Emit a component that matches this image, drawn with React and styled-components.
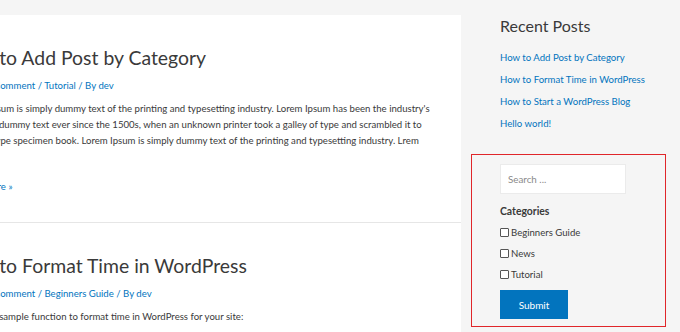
import React from "react";
import styled, { createGlobalStyle } from "styled-components";

const Global = createGlobalStyle`
  html, body {
    margin: 0;
    padding: 0;
    background: #f5f5f5;
    overflow: hidden;
  }
  body {
    font-family: Lato, "Open Sans", sans-serif;
    width: 680px;
    height: 332px;
  }
`;

const posts = [
  {
    title: "How to Add Post by Category",
    category: "Tutorial",
    text: [
      "Lorem Ipsum is simply dummy text of the printing and typesetting industry. Lorem Ipsum has been the industry's",
      "standard dummy text ever since the 1500s, when an unknown printer took a galley of type and scrambled it to",
      "make a type specimen book.  Lorem Ipsum is simply dummy text of the printing and typesetting industry. Lrem",
    ],
    more: true,
  },
  {
    title: "How to Format Time in WordPress",
    category: "Beginners Guide",
    text: ["Here is a sample function to format time in WordPress for your site:"],
  },
];

const recent = [
  "How to Add Post by Category",
  "How to Format Time in WordPress",
  "How to Start a WordPress Blog",
  "Hello world!",
];

const cats = ["Beginners Guide", "News", "Tutorial"];

const App = () => {
  return (
    <Page>
      <Global />
      <Main>
        <Inner>
          {posts.map((p) => (
            <Article key={p.title} $last={!p.more}>
              <Title>{p.title}</Title>
              <Meta>
                <a>Leave a Comment</a> / <a>{p.category}</a> / By <a>dev</a>
              </Meta>
              <Body>
                {p.text.map((t) => (
                  <Line key={t}>{t}</Line>
                ))}
              </Body>
              {p.more && <More>Read More »</More>}
            </Article>
          ))}
        </Inner>
      </Main>
      <Sidebar>
        <WidgetTitle>Recent Posts</WidgetTitle>
        <Links>
          {recent.map((r) => (
            <LinkItem key={r}>{r}</LinkItem>
          ))}
        </Links>
        <FormBox>
          <Search placeholder="Search ..." />
          <CatTitle>Categories</CatTitle>
          {cats.map((c) => (
            <Check key={c}>
              <Box />
              {c}
            </Check>
          ))}
          <Submit>Submit</Submit>
        </FormBox>
      </Sidebar>
    </Page>
  );
};

export default App;

const Page = styled.div`
  display: flex;
  align-items: flex-start;
  width: 680px;
  height: 332px;
  overflow: hidden;
`;
const Main = styled.div`
  width: 461px;
  flex: none;
  margin-top: 15px;
  background: #fff;
  overflow: hidden;
  height: 317px;
`;
const Inner = styled.div`
  margin-left: -40px;
  white-space: nowrap;
`;
const Article = styled.div`
  padding: 28px 0 ${(p) => (p.$last ? "0" : "27px")};
  border-bottom: ${(p) => (p.$last ? "none" : "1px solid #e6e6e6")};
`;
const Title = styled.h2`
  margin: 0 0 0 -6px;
  font-size: 19.4px;
  line-height: 30px;
  font-weight: 400;
  color: #3a3a3a;
`;
const Meta = styled.div`
  margin-top: 5px;
  font-size: 9.6px;
  line-height: 16px;
  color: #0274be;
  a {
    color: #0274be;
  }
`;
const Body = styled.div`
  margin-top: 7px;
`;
const Line = styled.div`
  font-size: 9.6px;
  line-height: 16px;
  color: #3a3a3a;
`;
const More = styled.div`
  margin-top: 30px;
  font-size: 9.6px;
  line-height: 16px;
  color: #0274be;
`;
const Sidebar = styled.div`
  flex: 1;
  padding: 14px 0 0 10px;
`;
const WidgetTitle = styled.h3`
  margin: 0 0 0 29px;
  font-size: 16px;
  line-height: 24px;
  font-weight: 400;
  color: #3a3a3a;
`;
const Links = styled.div`
  margin: 9px 0 0 29px;
  display: flex;
  flex-direction: column;
`;
const LinkItem = styled.a`
  font-size: 9.6px;
  line-height: 22px;
  color: #0274be;
  white-space: nowrap;
`;
const FormBox = styled.div`
  margin-top: 19px;
  width: 165px;
  border: 1px solid #e0262a;
  padding: 9px 0 7px 28px;
  display: flex;
  flex-direction: column;
  align-items: flex-start;
`;
const Search = styled.input`
  width: 126px;
  height: 30px;
  box-sizing: border-box;
  border: 1px solid #ebebeb;
  background: #fff;
  padding: 0 7px;
  font-family: inherit;
  font-size: 9.8px;
  color: #3a3a3a;
  outline: none;
  &::placeholder {
    color: #8a8a8a;
  }
`;
const CatTitle = styled.div`
  margin-top: 9px;
  font-size: 10.4px;
  line-height: 16px;
  font-weight: 700;
  color: #3a3a3a;
`;
const Check = styled.label`
  display: flex;
  align-items: center;
  height: 21px;
  font-size: 9.6px;
  color: #3a3a3a;
  &:first-of-type {
    margin-top: 3px;
  }
`;
const Box = styled.span`
  width: 7px;
  height: 7px;
  border: 1px solid #555;
  border-radius: 1px;
  background: #fff;
  margin-right: 2px;
`;
const Submit = styled.button`
  margin-top: 5px;
  width: 68px;
  height: 29px;
  border: none;
  background: #0274be;
  color: #fff;
  font-family: inherit;
  font-size: 10px;
`;
